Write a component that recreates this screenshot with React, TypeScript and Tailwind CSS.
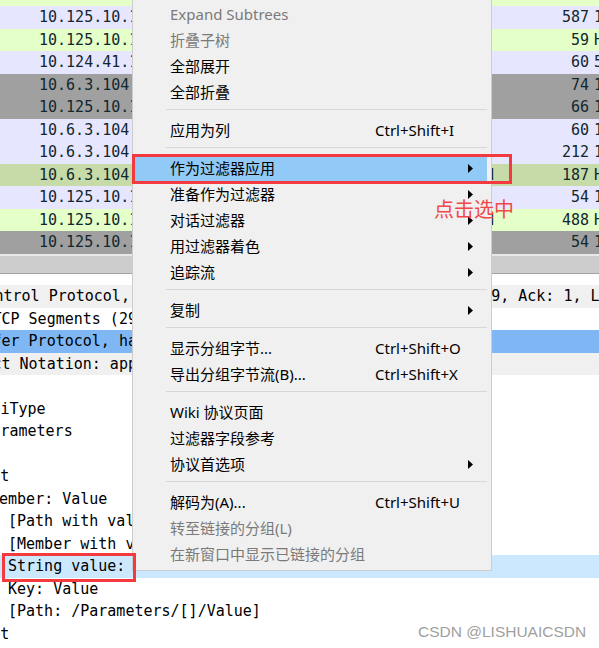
import React from "react";

type Packet = { bg: string; src: string; proto?: string; len: string; info: string };

const packets: Packet[] = [
    { bg: "bg-[#e7e6ff]", src: "10.125.10.150", len: "587", info: "13542 → 8080 [PSH, ACK]" },
    { bg: "bg-[#e4ffc7]", src: "10.125.10.150", len: "59", info: "HTTP/1.1 200" },
    { bg: "bg-[#e7e6ff]", src: "10.124.41.130", len: "60", info: "52479 → 8080 [ACK]" },
    { bg: "bg-[#a0a0a0]", src: "10.6.3.104", len: "74", info: "13544 → 8080 [SYN]" },
    { bg: "bg-[#a0a0a0]", src: "10.125.10.150", len: "66", info: "18080 → 13544 [SYN, ACK]" },
    { bg: "bg-[#e7e6ff]", src: "10.6.3.104", len: "60", info: "13544 → 8080 [ACK]" },
    { bg: "bg-[#e7e6ff]", src: "10.6.3.104", len: "212", info: "13544 → 8080 [PSH, ACK]" },
    { bg: "bg-[#c6dba8]", src: "10.6.3.104", proto: "HTTP/JSON", len: "187", info: "HTTP POST /api" },
    { bg: "bg-[#e7e6ff]", src: "10.125.10.150", len: "54", info: "18080 → 13544 [ACK]" },
    { bg: "bg-[#e4ffc7]", src: "10.125.10.150", proto: "HTTP/JSON", len: "488", info: "HTTP/1.1 200 OK" },
    { bg: "bg-[#a0a0a0]", src: "10.125.10.150", len: "54", info: "18080 → 13544 [FIN, ACK]" },
];

type Detail = { text: string; ml: string; bg?: string };

const details: Detail[] = [
    { text: "Transmission Control Protocol, Src Port: 8080, Dst Port: 52479, Seq: 29, Ack: 1, Len: 30", ml: "-ml-[141px]", bg: "bg-[#f0f0f0]" },
    { text: "[2 Reassembled TCP Segments (29 bytes): #14(0), #16(29)]", ml: "-ml-[143px]" },
    { text: "Hypertext Transfer Protocol, has 2 chunks (including last chunk)", ml: "-ml-[143px]", bg: "bg-[#7fb7f4]" },
    { text: "JavaScript Object Notation: application/json", ml: "-ml-[143px]", bg: "bg-[#f0f0f0]" },
    { text: "", ml: "ml-0" },
    { text: "Member Key: apiType", ml: "-ml-[126px]" },
    { text: "Member Key: Parameters", ml: "-ml-[126px]" },
    { text: "", ml: "ml-0" },
    { text: "Object", ml: "-ml-[45px]" },
    { text: "Member: Value", ml: "-ml-[10px]" },
    { text: "[Path with value: /Parameters/[]/Value:]", ml: "ml-[8px]" },
    { text: "[Member with value: Value:]", ml: "ml-[8px]" },
    { text: "String value: ", ml: "ml-[8px]", bg: "bg-[#cce8ff]" },
    { text: "Key: Value", ml: "ml-[8px]" },
    { text: "[Path: /Parameters/[]/Value]", ml: "ml-[8px]" },
    { text: "Object", ml: "-ml-[45px]" },
    { text: "", ml: "ml-0" },
];

type MenuItem = { label: string; shortcut?: string; sub?: boolean; disabled?: boolean; active?: boolean };
type MenuEntry = MenuItem | "sep";

const menu: MenuEntry[] = [
    { label: "Expand Subtrees", disabled: true },
    { label: "折叠子树", disabled: true },
    { label: "全部展开" },
    { label: "全部折叠" },
    "sep",
    { label: "应用为列", shortcut: "Ctrl+Shift+I" },
    "sep",
    { label: "作为过滤器应用", sub: true, active: true },
    { label: "准备作为过滤器", sub: true },
    { label: "对话过滤器", sub: true },
    { label: "用过滤器着色", sub: true },
    { label: "追踪流", sub: true },
    "sep",
    { label: "复制", sub: true },
    "sep",
    { label: "显示分组字节...", shortcut: "Ctrl+Shift+O" },
    { label: "导出分组字节流(B)...", shortcut: "Ctrl+Shift+X" },
    "sep",
    { label: "Wiki 协议页面" },
    { label: "过滤器字段参考" },
    { label: "协议首选项", sub: true },
    "sep",
    { label: "解码为(A)...", shortcut: "Ctrl+Shift+U" },
    { label: "转至链接的分组(L)", disabled: true },
    { label: "在新窗口中显示已链接的分组", disabled: true },
];

function SubArrow() {
    return (
        <svg width="5" height="9" viewBox="0 0 5 9">
            <path d="M0 0L5 4.5L0 9Z" fill="#000" />
        </svg>
    );
}

function ContextMenu() {
    return (
        <div className="absolute left-[132px] top-[-3px] w-[360px] border border-[#cccccc] bg-[#f0f0f0] pl-[2px] pr-[4px] pt-[3px] pb-[3px] font-['Noto_Sans','Noto_Sans_CJK_SC',sans-serif] text-[15px]">
            {menu.map((m, i) => {
                if (m === "sep") {
                    return (
                        <div key={i} className="h-[12px] pt-[4px] pl-[31px]">
                            <div className="h-px bg-[#d7d7d7]"></div>
                        </div>
                    );
                }
                return (
                    <div
                        key={i}
                        className={`grid h-[26px] grid-cols-[205px_93px_5px] items-center pl-[35px] leading-[26px] whitespace-nowrap ${m.active ? "bg-[#91c9f7]" : ""} ${m.disabled ? "text-[#7a7a7a]" : "text-black"}`}
                    >
                        <span>{m.label}</span>
                        <span>{m.shortcut ?? ""}</span>
                        <span className="flex items-center">{m.sub && <SubArrow />}</span>
                    </div>
                );
            })}
        </div>
    );
}

export default function App() {
    return (
        <div className="relative h-[648px] w-[599px] overflow-hidden bg-white">
            {/* packet list */}
            <div className="flex flex-col font-['DejaVu_Sans_Mono',monospace] text-[15px] text-[#12272e]">
                <div className="h-[6px] bg-[#e4ffc7]"></div>
                {packets.map((p, i) => (
                    <div key={i} className={`flex h-[22.5px] items-center whitespace-nowrap pl-[39px] leading-[22.5px] ${p.bg}`}>
                        <span className="w-[310px] shrink-0">{p.src}</span>
                        <span className="w-[145px] shrink-0 text-right">{p.proto ?? ""}</span>
                        <span className="w-[95px] shrink-0 text-right">{p.len}</span>
                        <span className="shrink-0 pl-[5px]">{p.info}</span>
                    </div>
                ))}
                <div className="h-[2px] bg-[#e8e8e8]"></div>
                <div className="h-[17.5px] bg-[#cdcdcd]"></div>
                <div className="h-px bg-[#a3a3a3]"></div>
                <div className="h-[11px] bg-white"></div>
            </div>

            {/* packet details */}
            <div className="flex flex-col font-['DejaVu_Sans_Mono',monospace] text-[15px] text-black">
                {details.map((d, i) => (
                    <div key={i} className={`flex h-[22.5px] items-center whitespace-nowrap leading-[22.5px] ${d.bg ?? ""}`}>
                        <span className={`shrink-0 whitespace-pre ${d.ml}`}>{d.text}</span>
                    </div>
                ))}
            </div>

            <ContextMenu />

            {/* annotations */}
            <div className="absolute left-[132px] top-[154px] h-[30px] w-[380px] border-[3px] border-[#f23a3f]"></div>
            <div className="absolute left-[2px] top-[553px] h-[29px] w-[134px] border-[3px] border-[#f23a3f]"></div>
            <div className="absolute left-[434px] top-[199px] font-['Noto_Sans_CJK_SC',sans-serif] text-[20px] leading-none text-[#f04848]">点击选中</div>

            <div className="absolute left-[418px] top-[624px] font-['Liberation_Sans',Arial,sans-serif] text-[15.5px] leading-none text-[#a0a0a0]">CSDN @LISHUAICSDN</div>
        </div>
    );
}
